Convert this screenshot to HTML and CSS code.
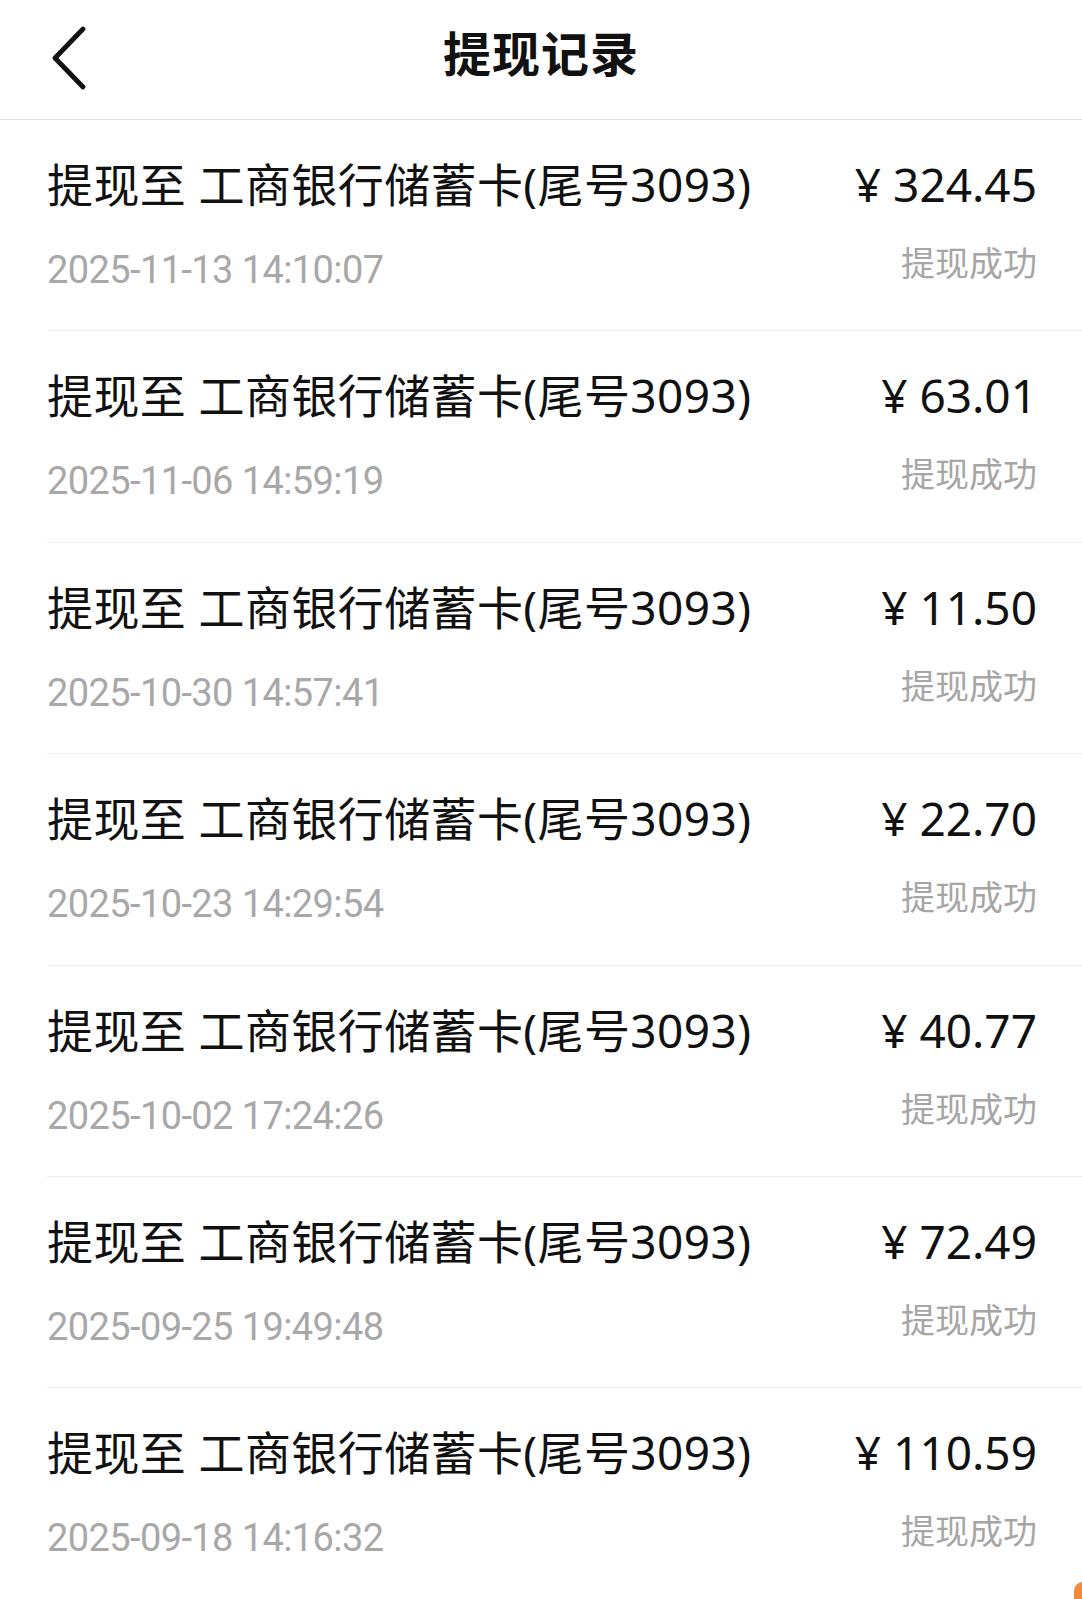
FILE: index.html
```html
<!DOCTYPE html>
<html lang="zh-CN">
<head>
<meta charset="utf-8">
<title>提现记录</title>
<link rel="stylesheet" href="styles.css">
</head>
<body>
<div class="page">
  <header class="topbar">
    <svg class="back" viewBox="0 0 40 64" width="40" height="64" aria-hidden="true">
      <polyline points="33,3 5,32 33,61" fill="none" stroke="#111" stroke-width="4.8" stroke-linecap="round" stroke-linejoin="round"/>
    </svg>
    <h1 class="title">提现记录</h1>
  </header>
  <ul class="list">
    <li class="row">
      <div class="left"><div class="name">提现至 工商银行储蓄卡(尾号3093)</div><div class="time">2025-11-13 14:10:07</div></div>
      <div class="right"><div class="amount">¥ 324.45</div><div class="status">提现成功</div></div>
    </li>
    <li class="row">
      <div class="left"><div class="name">提现至 工商银行储蓄卡(尾号3093)</div><div class="time">2025-11-06 14:59:19</div></div>
      <div class="right"><div class="amount">¥ 63.01</div><div class="status">提现成功</div></div>
    </li>
    <li class="row">
      <div class="left"><div class="name">提现至 工商银行储蓄卡(尾号3093)</div><div class="time">2025-10-30 14:57:41</div></div>
      <div class="right"><div class="amount">¥ 11.50</div><div class="status">提现成功</div></div>
    </li>
    <li class="row">
      <div class="left"><div class="name">提现至 工商银行储蓄卡(尾号3093)</div><div class="time">2025-10-23 14:29:54</div></div>
      <div class="right"><div class="amount">¥ 22.70</div><div class="status">提现成功</div></div>
    </li>
    <li class="row">
      <div class="left"><div class="name">提现至 工商银行储蓄卡(尾号3093)</div><div class="time">2025-10-02 17:24:26</div></div>
      <div class="right"><div class="amount">¥ 40.77</div><div class="status">提现成功</div></div>
    </li>
    <li class="row">
      <div class="left"><div class="name">提现至 工商银行储蓄卡(尾号3093)</div><div class="time">2025-09-25 19:49:48</div></div>
      <div class="right"><div class="amount">¥ 72.49</div><div class="status">提现成功</div></div>
    </li>
    <li class="row">
      <div class="left"><div class="name">提现至 工商银行储蓄卡(尾号3093)</div><div class="time">2025-09-18 14:16:32</div></div>
      <div class="right"><div class="amount">¥ 110.59</div><div class="status">提现成功</div></div>
    </li>
  </ul>
  <div class="float-tab"></div>
</div>
</body>
</html>
```
FILE: styles.css
```css
html, body {
  margin: 0;
  padding: 0;
  background: #ffffff;
}
body {
  font-family: "Noto Sans", "Noto Sans CJK SC", sans-serif;
  color: #111111;
}
.page {
  position: relative;
  width: 1082px;
  height: 1599px;
  overflow: hidden;
}
.topbar {
  position: relative;
  box-sizing: border-box;
  height: 120px;
  padding-bottom: 18px;
  border-bottom: 1px solid #e2e2e2;
  display: flex;
  align-items: center;
  justify-content: center;
}
.back {
  position: absolute;
  left: 50px;
  top: 26px;
}
.title {
  margin: 0;
  font-family: "Noto Sans CJK SC", sans-serif;
  font-size: 48px;
  font-weight: 700;
  line-height: 60px;
  color: #111;
  letter-spacing: 1px;
}
.list {
  list-style: none;
  margin: 0 0 0 47px;
  padding: 0;
}
.row {
  box-sizing: border-box;
  height: 211.4px;
  border-bottom: 1px solid #eeeeee;
  padding-right: 45px;
  display: flex;
  justify-content: space-between;
}
.left, .right {
  display: flex;
  flex-direction: column;
}
.right {
  align-items: flex-end;
}
.name {
  margin-top: 34px;
  font-size: 46px;
  line-height: 60px;
  color: #111;
  letter-spacing: 0.4px;
  white-space: nowrap;
}
.time {
  margin-top: 31px;
  font-family: Roboto, "Noto Sans", sans-serif;
  font-size: 38px;
  line-height: 50px;
  color: #a8a8a8;
  letter-spacing: -0.6px;
  white-space: nowrap;
}
.amount {
  margin-top: 34px;
  font-family: "Noto Sans", sans-serif;
  font-size: 46px;
  line-height: 60px;
  color: #111;
  white-space: nowrap;
}
.status {
  margin-top: 23px;
  font-family: "Noto Sans CJK SC", sans-serif;
  font-size: 34px;
  line-height: 50px;
  color: #a6a6a6;
  white-space: nowrap;
}
.float-tab {
  position: absolute;
  left: 1074px;
  top: 1582px;
  width: 30px;
  height: 40px;
  border-radius: 9px 0 0 0;
  background: #ef8a3c;
}
```
